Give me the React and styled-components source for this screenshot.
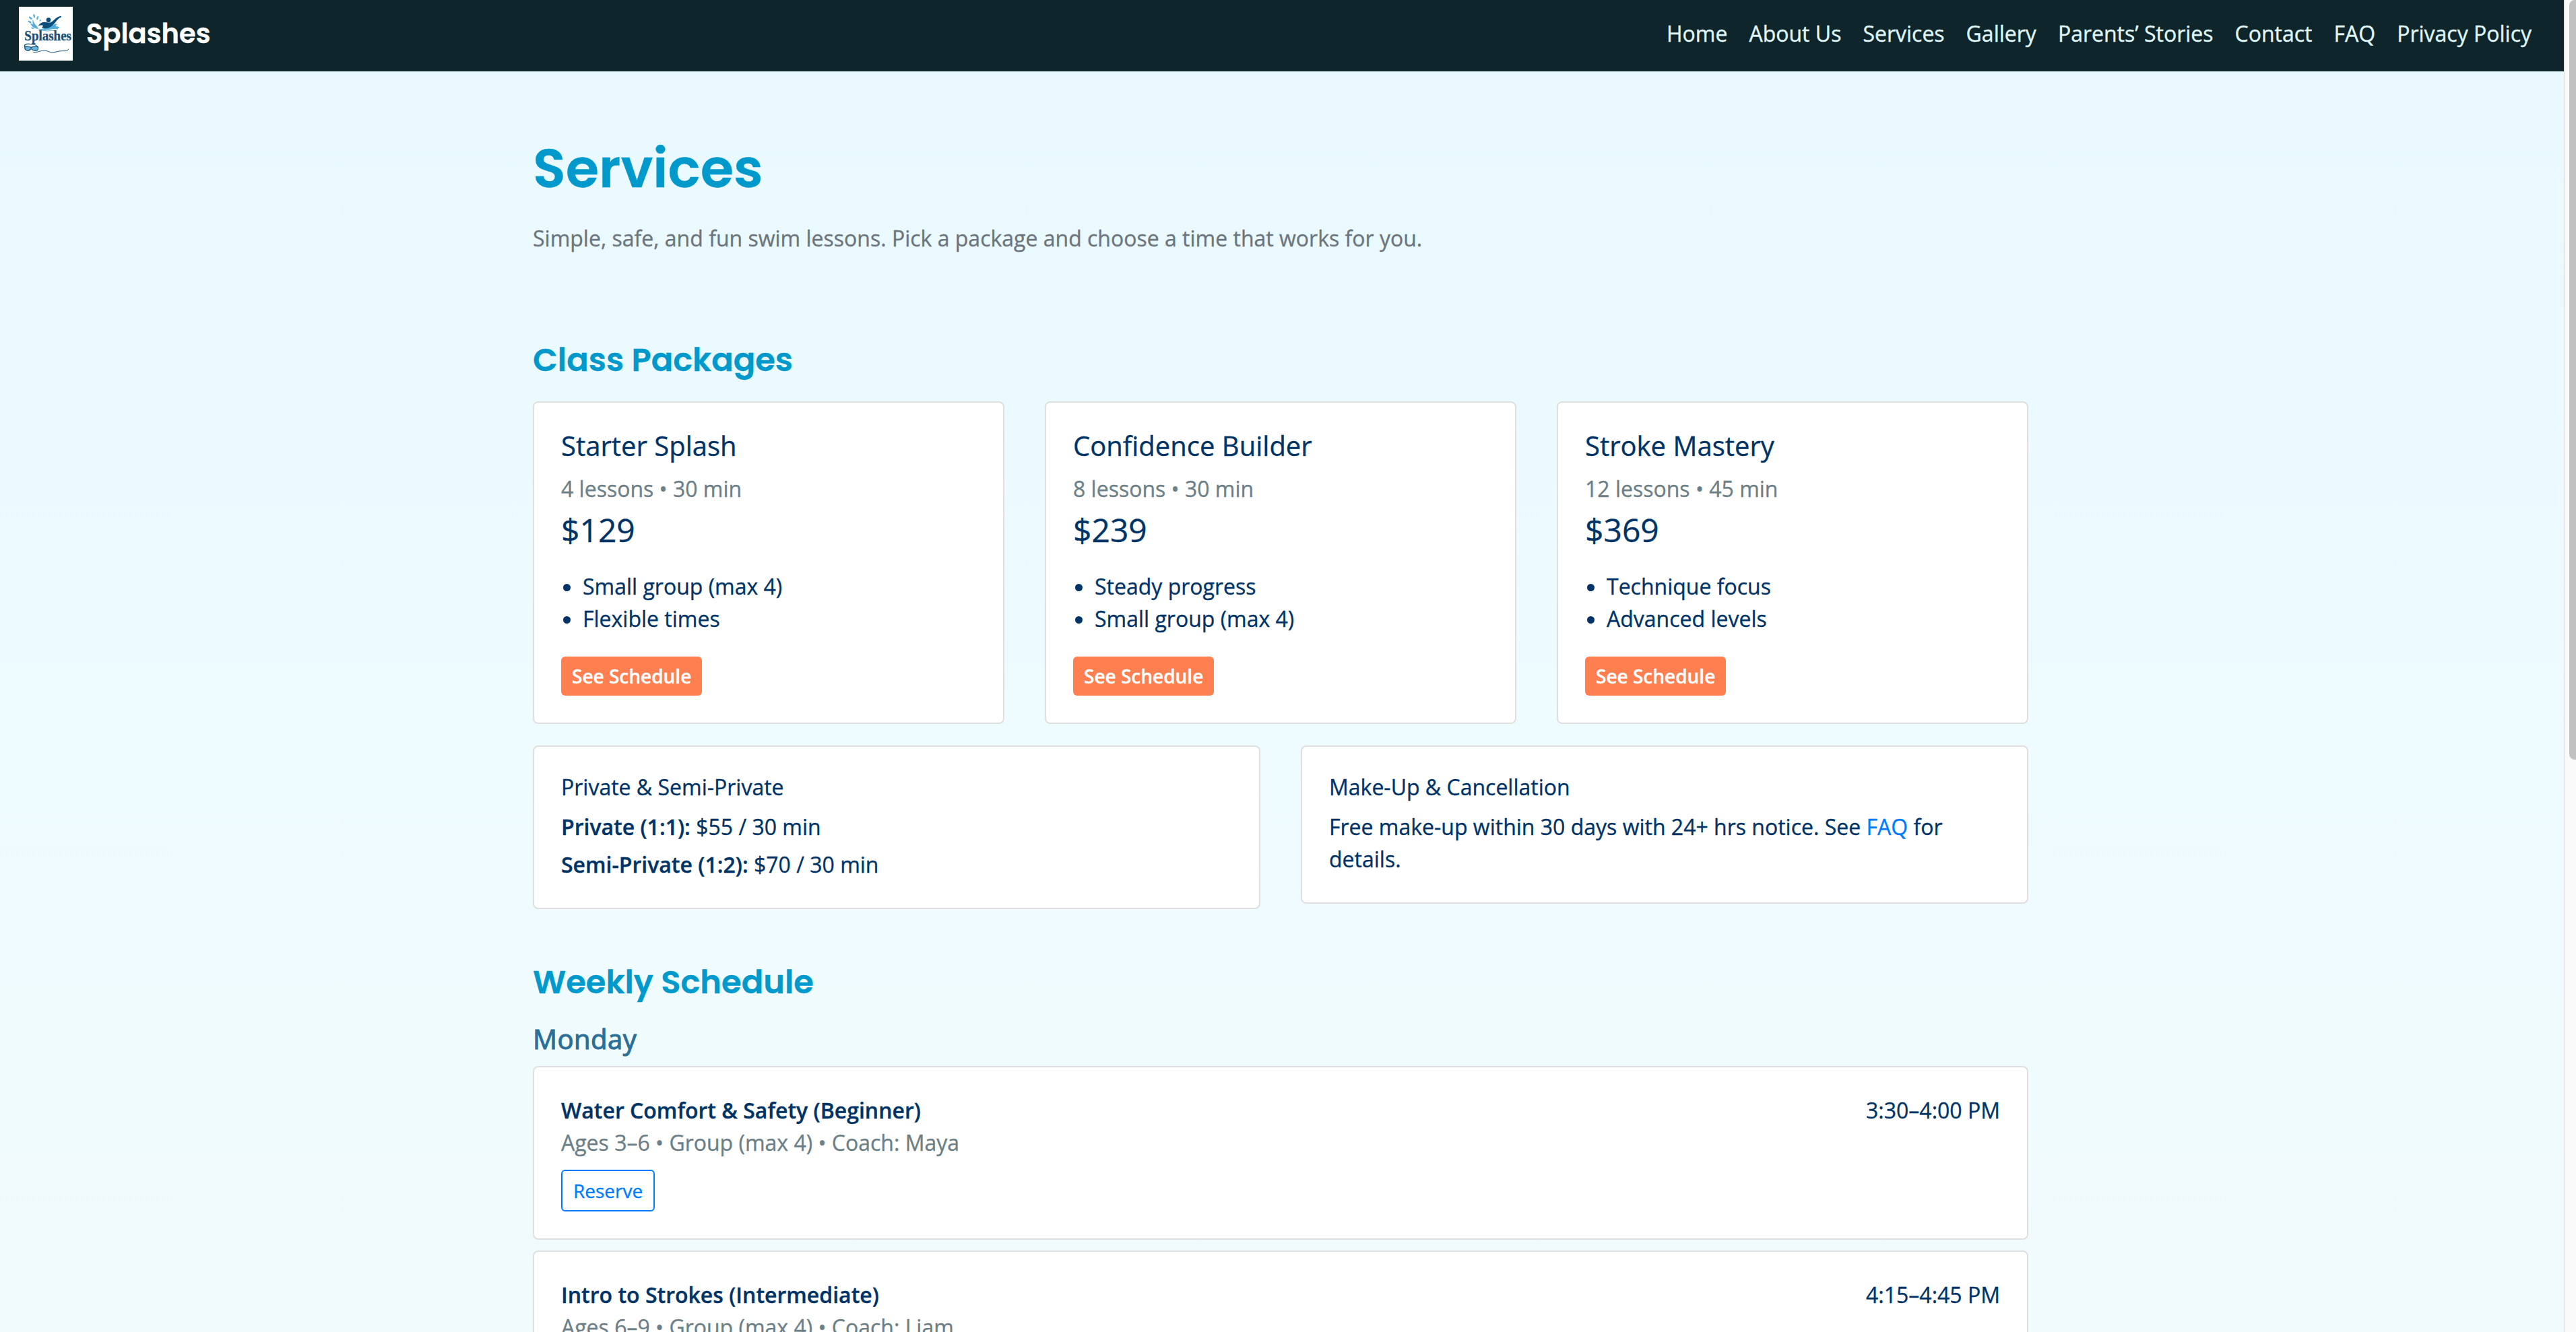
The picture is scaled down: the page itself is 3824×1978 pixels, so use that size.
import React from "react";
import styled, { createGlobalStyle } from "styled-components";

const body = `"Open Sans", "Noto Sans", sans-serif`;
const display = `Poppins, Inter, "Open Sans", sans-serif`;

const GlobalStyle = createGlobalStyle`
  *, *::before, *::after { box-sizing: border-box; }
  html, body { margin: 0; height: 100%; overflow: hidden; }
  body {
    font-family: ${body};
    font-size: 32px;
    line-height: 1.5;
    color: #003366;
    -webkit-text-stroke: 0.35px currentColor;
  }
`;

const Window = styled.div`
  display: grid;
  grid-template-columns: minmax(0, 1fr) 18px;
  height: 1978px;
  overflow: hidden;
`;

const Page = styled.div`
  height: 1978px;
  overflow: hidden;
  background: linear-gradient(180deg, #e8f9ff 0, #eefbff 1100px, #f0fbfd 1650px, #f1fafd 1978px);
`;

const Navbar = styled.header`
  display: flex;
  align-items: center;
  justify-content: space-between;
  height: 106px;
  padding: 0 32px 6px 28px;
  background: #0e262b;
`;

const Brand = styled.a`
  display: flex;
  align-items: center;
  gap: 20px;
  color: #fff;
  font-family: ${display};
  font-size: 40px;
  font-weight: 600;
  line-height: 60px;
`;

const LogoImage = styled.svg`
  display: block;
  width: 80px;
  height: 80px;
`;

const NavLinks = styled.nav`
  display: flex;
`;

const NavLink = styled.a`
  padding: 0 16px;
  color: #e0f7fa;
  white-space: nowrap;
`;

const Main = styled.main`
  width: 2220px;
  margin: 0 auto 0 791px;
  padding-top: 96px;
`;

const PageTitle = styled.h1`
  margin: 0 0 32px;
  color: #0099cc;
  font-family: ${display};
  font-size: 80px;
  font-weight: 600;
  line-height: 96px;
`;

const Lead = styled.p`
  margin: 0;
  color: #6c757d;
`;

const SectionTitle = styled.h2`
  margin: 0 0 32px;
  color: #0099cc;
  font-family: ${display};
  font-size: 48px;
  font-weight: 600;
  line-height: 57.6px;
`;

const Section = styled.section`
  padding-top: ${(p) => p.$top}px;
`;

const Grid = styled.div`
  display: grid;
  grid-template-columns: repeat(${(p) => p.$columns}, 1fr);
  align-items: start;
  gap: 60px;
  margin-bottom: 32px;
`;

const Card = styled.article`
  padding: 40px;
  background: #fff;
  border: 2px solid #dfdfdf;
  border-radius: 8px;
`;

const PackageName = styled.h4`
  margin: 0 0 16px;
  font-size: 40px;
  font-weight: 400;
  line-height: 48px;
`;

const Muted = styled.div`
  color: #6c7f87;
`;

const Price = styled.div`
  margin: 1px 0 24px;
  font-size: 48px;
  line-height: 72px;
`;

const Features = styled.ul`
  margin: 0 0 32px;
  padding-left: 32px;
`;

const PrimaryButton = styled.a`
  display: block;
  width: fit-content;
  padding: 8px 16px;
  border-radius: 6px;
  background: #ff7f50;
  color: #fff;
  font-size: 28px;
  font-weight: 600;
  line-height: 42px;
`;

const OutlineButton = styled.a`
  display: block;
  width: fit-content;
  margin-top: 16px;
  padding: 8px 16px;
  border: 2px solid #007bff;
  border-radius: 6px;
  color: #007bff;
  font-size: 28px;
  line-height: 42px;
`;

const NoteTitle = styled.h5`
  margin: 0 0 16px;
  font-size: 32px;
  font-weight: 400;
  line-height: 39.2px;
`;

const NoteLine = styled.p`
  margin: 0;
  & + & { margin-top: 8px; }
`;

const Strong = styled.strong`
  font-weight: 600;
`;

const TextLink = styled.a`
  color: #007bff;
`;

const Day = styled.h3`
  margin: 0 0 16px;
  color: #2a6f97;
  font-size: 40px;
  font-weight: 500;
  line-height: 48px;
  letter-spacing: 0.5px;
  -webkit-text-stroke: 1.1px currentColor;
`;

const Lessons = styled.div`
  display: grid;
  gap: 16px;
`;

const LessonHead = styled.div`
  display: flex;
  justify-content: space-between;
`;

const ScrollTrack = styled.div`
  display: flex;
  justify-content: flex-end;
  height: 1978px;
  background: #fafafa;
  border-left: 2px solid #e8e8e8;
`;

const ScrollThumb = styled.div`
  width: 10px;
  height: 1128px;
  border-radius: 8px 0 0 8px;
  background: #c1c1c1;
`;

function Logo() {
  return (
    <LogoImage viewBox="0 0 240 240" role="img" aria-label="Splashes">
      <rect width="240" height="240" fill="#fff" />
      <g fill="#55aed8">
        <ellipse cx="68" cy="41" rx="4" ry="8" transform="rotate(-12 68 41)" />
        <ellipse cx="52" cy="50" rx="4" ry="9" transform="rotate(-50 52 50)" />
        <ellipse cx="48" cy="67" rx="3.5" ry="8" transform="rotate(-65 48 67)" />
        <ellipse cx="83" cy="50" rx="3.5" ry="9" transform="rotate(18 83 50)" />
        <ellipse cx="95" cy="61" rx="2.5" ry="5" transform="rotate(40 95 61)" />
        <ellipse cx="61" cy="95" rx="3" ry="7" transform="rotate(-75 61 95)" />
        <path d="M45 76c12-4 20 2 24 10 8 12 22 14 36 12 16-2 26-10 40-16 10-4 18-6 25-5-4 3-5 7-6 11 7-1 12 1 18 4-6 2-8 4-10 9-8-4-14-3-24-1-16 4-32 6-48 3-20-3-36-9-43-18-3-5-5-8-12-9z" />
        <path d="M62 56c4 14 10 24 24 36l-10 4c-12-10-17-24-14-40z" />
      </g>
      <path d="M96 106c14-3 28 5 43 1 10-3 18-1 23 1" fill="none" stroke="#55aed8" strokeWidth="3" />
      <circle cx="132" cy="59" r="10" fill="#0c4f7e" />
      <path
        d="M86 85c6-11 17-17 30-17 10 0 18 5 28 1 12-7 20-22 40-27 5-1 7 3 3 5-14 6-20 18-30 29-9 9-16 16-26 19-10 2-20 2-30-1 4-3 6-6 7-10-8-2-15-2-22 1z"
        fill="#0c4f7e"
      />
      <text x="25" y="149" textLength="209" lengthAdjust="spacingAndGlyphs" fill="#1b4e75" stroke="#1b4e75" strokeWidth="1" fontFamily='"Liberation Serif", serif' fontSize="62">
        Splashes
      </text>
      <g stroke="#1b4e75" fill="none" strokeWidth="4">
        <path d="M26 180c-4-12 8-16 24-14 16 1 32 5 34 14" />
        <path d="M27 178c10-3 19-1 27 3 8-3 18-5 30-3 5 9 0 17-9 18-11 1-16-5-20-9-4 4-8 9-16 8-10-1-14-9-12-17z" fill="#69b7da" />
        <path d="M64 203c26 1 38-12 56-7 17 4 24 11 42 6 16-4 26-6 42-5 9 0 15-2 17-9" strokeWidth="3" />
      </g>
    </LogoImage>
  );
}

const links = ["Home", "About Us", "Services", "Gallery", "Parents’ Stories", "Contact", "FAQ", "Privacy Policy"];

const packages = [
  { name: "Starter Splash", detail: "4 lessons • 30 min", price: "$129", features: ["Small group (max 4)", "Flexible times"] },
  { name: "Confidence Builder", detail: "8 lessons • 30 min", price: "$239", features: ["Steady progress", "Small group (max 4)"] },
  { name: "Stroke Mastery", detail: "12 lessons • 45 min", price: "$369", features: ["Technique focus", "Advanced levels"] },
];

const lessons = [
  { name: "Water Comfort & Safety (Beginner)", detail: "Ages 3–6 • Group (max 4) • Coach: Maya", time: "3:30–4:00 PM" },
  { name: "Intro to Strokes (Intermediate)", detail: "Ages 6–9 • Group (max 4) • Coach: Liam", time: "4:15–4:45 PM" },
];

export default function App() {
  return (
    <>
      <GlobalStyle />
      <Window>
        <Page>
          <Navbar>
            <Brand>
              <Logo />
              <span>Splashes</span>
            </Brand>
            <NavLinks>
              {links.map((l) => (
                <NavLink key={l}>{l}</NavLink>
              ))}
            </NavLinks>
          </Navbar>
          <Main>
            <PageTitle>Services</PageTitle>
            <Lead>Simple, safe, and fun swim lessons. Pick a package and choose a time that works for you.</Lead>
            <Section $top={128}>
              <SectionTitle>Class Packages</SectionTitle>
              <Grid $columns={3}>
                {packages.map((p) => (
                  <Card key={p.name}>
                    <PackageName>{p.name}</PackageName>
                    <Muted>{p.detail}</Muted>
                    <Price>{p.price}</Price>
                    <Features>
                      {p.features.map((f) => (
                        <li key={f}>{f}</li>
                      ))}
                    </Features>
                    <PrimaryButton>See Schedule</PrimaryButton>
                  </Card>
                ))}
              </Grid>
              <Grid $columns={2}>
                <Card>
                  <NoteTitle>Private &amp; Semi-Private</NoteTitle>
                  <NoteLine><Strong>Private (1:1):</Strong> $55 / 30 min</NoteLine>
                  <NoteLine><Strong>Semi-Private (1:2):</Strong> $70 / 30 min</NoteLine>
                </Card>
                <Card>
                  <NoteTitle>Make-Up &amp; Cancellation</NoteTitle>
                  <NoteLine>
                    Free make-up within 30 days with 24+ hrs notice. See <TextLink>FAQ</TextLink> for details.
                  </NoteLine>
                </Card>
              </Grid>
            </Section>
            <Section $top={48}>
              <SectionTitle>Weekly Schedule</SectionTitle>
              <Day>Monday</Day>
              <Lessons>
                {lessons.map((l) => (
                  <Card key={l.name}>
                    <LessonHead>
                      <Strong>{l.name}</Strong>
                      <span>{l.time}</span>
                    </LessonHead>
                    <Muted>{l.detail}</Muted>
                    <OutlineButton>Reserve</OutlineButton>
                  </Card>
                ))}
              </Lessons>
            </Section>
          </Main>
        </Page>
        <ScrollTrack>
          <ScrollThumb />
        </ScrollTrack>
      </Window>
    </>
  );
}
